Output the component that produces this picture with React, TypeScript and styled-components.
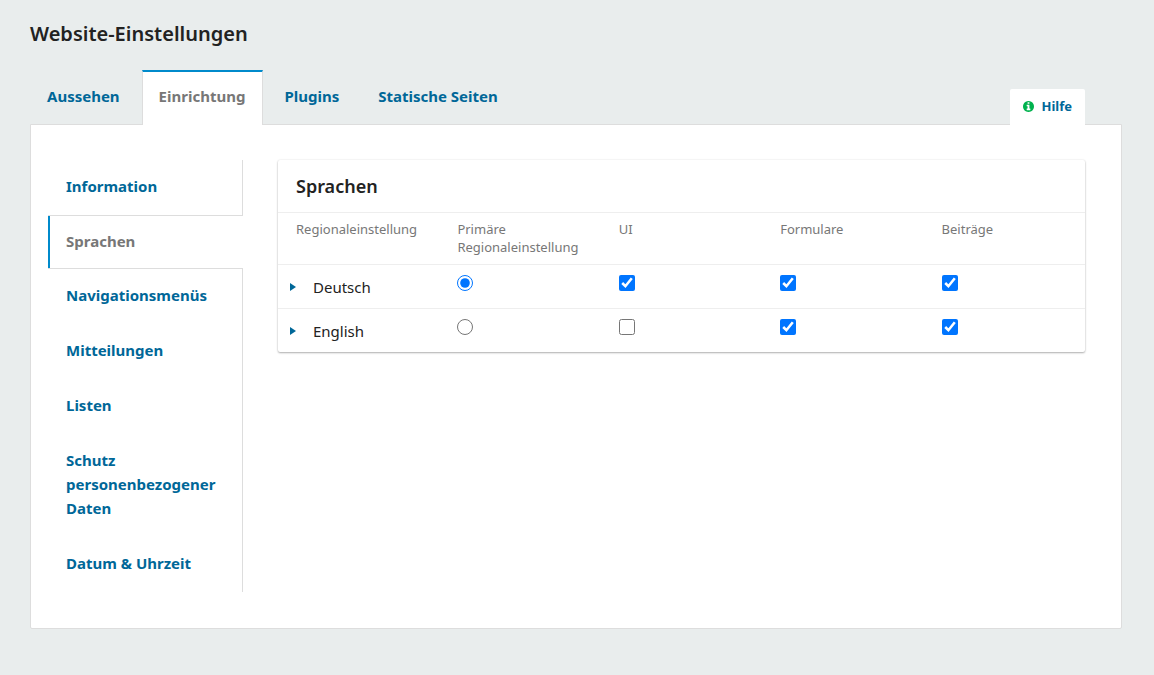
import React, { useState } from "react";
import styled, { createGlobalStyle } from "styled-components";

const color = {
  page: "#e9eded",
  line: "#dddddd",
  rule: "#eeeeee",
  accent: "#008acb",
  link: "#006798",
  muted: "#777777",
  text: "#222222",
  check: "#0075ff",
  success: "#00b24e",
};

const GlobalStyle = createGlobalStyle`
  *, *::before, *::after { box-sizing: border-box; }
  body {
    margin: 0;
    background: ${color.page};
    color: ${color.text};
    font-family: "Noto Sans", "Open Sans", sans-serif;
    font-size: 15px;
    line-height: 24px;
  }
`;

const Page = styled.main`
  padding: 20px 32px 46px 30px;
`;

const PageTitle = styled.h1`
  margin: 0 0 22px;
  font-size: 20px;
  font-weight: 600;
  line-height: 28px;
`;

const TabBar = styled.div`
  display: flex;
  align-items: flex-end;
  margin-bottom: -1px;
`;

const TabList = styled.div`
  display: flex;
  flex: 1;
  gap: 4px;
`;

const Tab = styled.button<{ $active: boolean }>`
  height: 55px;
  padding: 0 17px 5px 16px;
  border: 1px solid transparent;
  border-top: 2px solid ${(p) => (p.$active ? color.accent : "transparent")};
  border-bottom: 0;
  border-left-color: ${(p) => (p.$active ? color.line : "transparent")};
  border-right-color: ${(p) => (p.$active ? color.line : "transparent")};
  background: ${(p) => (p.$active ? "#fff" : "transparent")};
  color: ${(p) => (p.$active ? color.muted : color.link)};
  font: inherit;
  font-weight: 700;
  cursor: pointer;
  position: relative;
  z-index: 1;
`;

const HelpButton = styled.button`
  display: flex;
  align-items: center;
  gap: 8px;
  height: 36px;
  margin-right: 37px;
  padding: 0 13px 2px;
  border: 0;
  border-radius: 2px 2px 0 0;
  background: #fff;
  color: ${color.link};
  font: inherit;
  font-size: 13px;
  font-weight: 700;
  cursor: pointer;
  position: relative;
  z-index: 1;
`;

const Panel = styled.section`
  display: flex;
  gap: 35px;
  align-items: flex-start;
  padding: 35px 36px 36px 17px;
  border: 1px solid ${color.line};
  border-radius: 0 0 2px 2px;
  background: #fff;
`;

const SideNav = styled.div`
  display: flex;
  flex: 0 0 195px;
  flex-direction: column;
`;

const SideTab = styled.button<{ $active: boolean }>`
  padding: ${(p) => (p.$active ? "13px 16px 15px 18px" : "14px 16px 17px 18px")};
  border: 0 solid ${color.line};
  border-width: ${(p) => (p.$active ? "1px 0" : "0 1px 0 0")};
  background: ${(p) =>
    p.$active ? `linear-gradient(${color.accent}, ${color.accent}) 0 0 / 2px 100% no-repeat border-box` : "transparent"};
  color: ${(p) => (p.$active ? color.muted : color.link)};
  font: inherit;
  font-weight: 700;
  text-align: left;
  cursor: pointer;
`;

const Card = styled.div`
  flex: 1;
  min-width: 0;
  border-radius: 2px;
  background: #fff;
  box-shadow: 0 1px 2px rgba(0, 0, 0, 0.3), 0 0 2px rgba(0, 0, 0, 0.1);
`;

const CardTitle = styled.h2`
  margin: 0;
  padding: 14px 18px;
  font-size: 18px;
  font-weight: 600;
  line-height: 24px;
`;

const Table = styled.table`
  width: 100%;
  border-collapse: separate;
  border-spacing: 0;
  table-layout: fixed;
`;

const HeadCell = styled.th`
  height: 52px;
  padding: 7px 0 8px 18px;
  border-top: 1px solid ${color.rule};
  color: ${color.muted};
  font-size: 13px;
  font-weight: 400;
  line-height: 18px;
  text-align: left;
  vertical-align: top;
`;

const Cell = styled.td`
  height: 44px;
  padding: 10px 0 0 18px;
  border-top: 1px solid ${color.rule};
  vertical-align: top;
`;

const LocaleCell = styled(Cell)`
  padding-left: 12px;
`;

const Locale = styled.div`
  display: flex;
  align-items: center;
`;

const Expander = styled.button`
  display: flex;
  width: 23px;
  padding: 4px 0;
  border: 0;
  background: transparent;
  color: ${color.link};
  cursor: pointer;
`;

const Choice = styled.input`
  display: block;
  width: 16px;
  height: 16px;
  margin: 0;
  accent-color: ${color.check};
`;

const InfoIcon = () => (
  <svg width="11" height="11" viewBox="0 0 1536 1536" aria-hidden="true">
    <path
      fill={color.success}
      d="M1024 1248v-160q0-14-9-23t-23-9h-96V544q0-14-9-23t-23-9H544q-14 0-23 9t-9 23v160q0 14 9 23t23 9h96v320h-96q-14 0-23 9t-9 23v160q0 14 9 23t23 9h448q14 0 23-9t9-23zM896 352V192q0-14-9-23t-23-9H672q-14 0-23 9t-9 23v160q0 14 9 23t23 9h192q14 0 23-9t9-23zm640 416q0 209-103 385.500T1153.500 1433 768 1536t-385.500-103T103 1153.500 0 768t103-385.500T382.500 103 768 0t385.500 103T1433 382.500 1536 768z"
    />
  </svg>
);

const Caret = () => (
  <svg width="6" height="8" viewBox="0 0 6 8" aria-hidden="true">
    <path d="M0 0L6 4L0 8Z" fill="currentColor" />
  </svg>
);

const tabs = ["Aussehen", "Einrichtung", "Plugins", "Statische Seiten"];
const sections = [
  "Information",
  "Sprachen",
  "Navigationsmenüs",
  "Mitteilungen",
  "Listen",
  "Schutz personenbezogener Daten",
  "Datum & Uhrzeit",
];
const columns = ["Regionaleinstellung", "Primäre Regionaleinstellung", "UI", "Formulare", "Beiträge"];
const locales = [
  { name: "Deutsch", flags: [true, true, true] },
  { name: "English", flags: [false, true, true] },
];

export default function App() {
  const [tab, setTab] = useState("Einrichtung");
  const [section, setSection] = useState("Sprachen");

  return (
    <>
      <GlobalStyle />
      <Page>
        <PageTitle>Website-Einstellungen</PageTitle>
        <TabBar>
          <TabList role="tablist">
            {tabs.map((t) => (
              <Tab key={t} type="button" role="tab" aria-selected={t === tab} $active={t === tab} onClick={() => setTab(t)}>
                {t}
              </Tab>
            ))}
          </TabList>
          <HelpButton type="button">
            <InfoIcon />
            Hilfe
          </HelpButton>
        </TabBar>
        <Panel>
          <SideNav role="tablist" aria-orientation="vertical">
            {sections.map((s) => (
              <SideTab
                key={s}
                type="button"
                role="tab"
                aria-selected={s === section}
                $active={s === section}
                onClick={() => setSection(s)}
              >
                {s}
              </SideTab>
            ))}
          </SideNav>
          <Card>
            <CardTitle>Sprachen</CardTitle>
            <Table>
              <thead>
                <tr>
                  {columns.map((c) => (
                    <HeadCell key={c} scope="col">
                      {c}
                    </HeadCell>
                  ))}
                </tr>
              </thead>
              <tbody>
                {locales.map((l, row) => (
                  <tr key={l.name}>
                    <LocaleCell>
                      <Locale>
                        <Expander type="button" aria-label={`${l.name}: Einstellungen`}>
                          <Caret />
                        </Expander>
                        {l.name}
                      </Locale>
                    </LocaleCell>
                    <Cell>
                      <Choice type="radio" name="primary" defaultChecked={row === 0} aria-label={`${l.name}: ${columns[1]}`} />
                    </Cell>
                    {l.flags.map((on, i) => (
                      <Cell key={columns[i + 2]}>
                        <Choice type="checkbox" defaultChecked={on} aria-label={`${l.name}: ${columns[i + 2]}`} />
                      </Cell>
                    ))}
                  </tr>
                ))}
              </tbody>
            </Table>
          </Card>
        </Panel>
      </Page>
    </>
  );
}
